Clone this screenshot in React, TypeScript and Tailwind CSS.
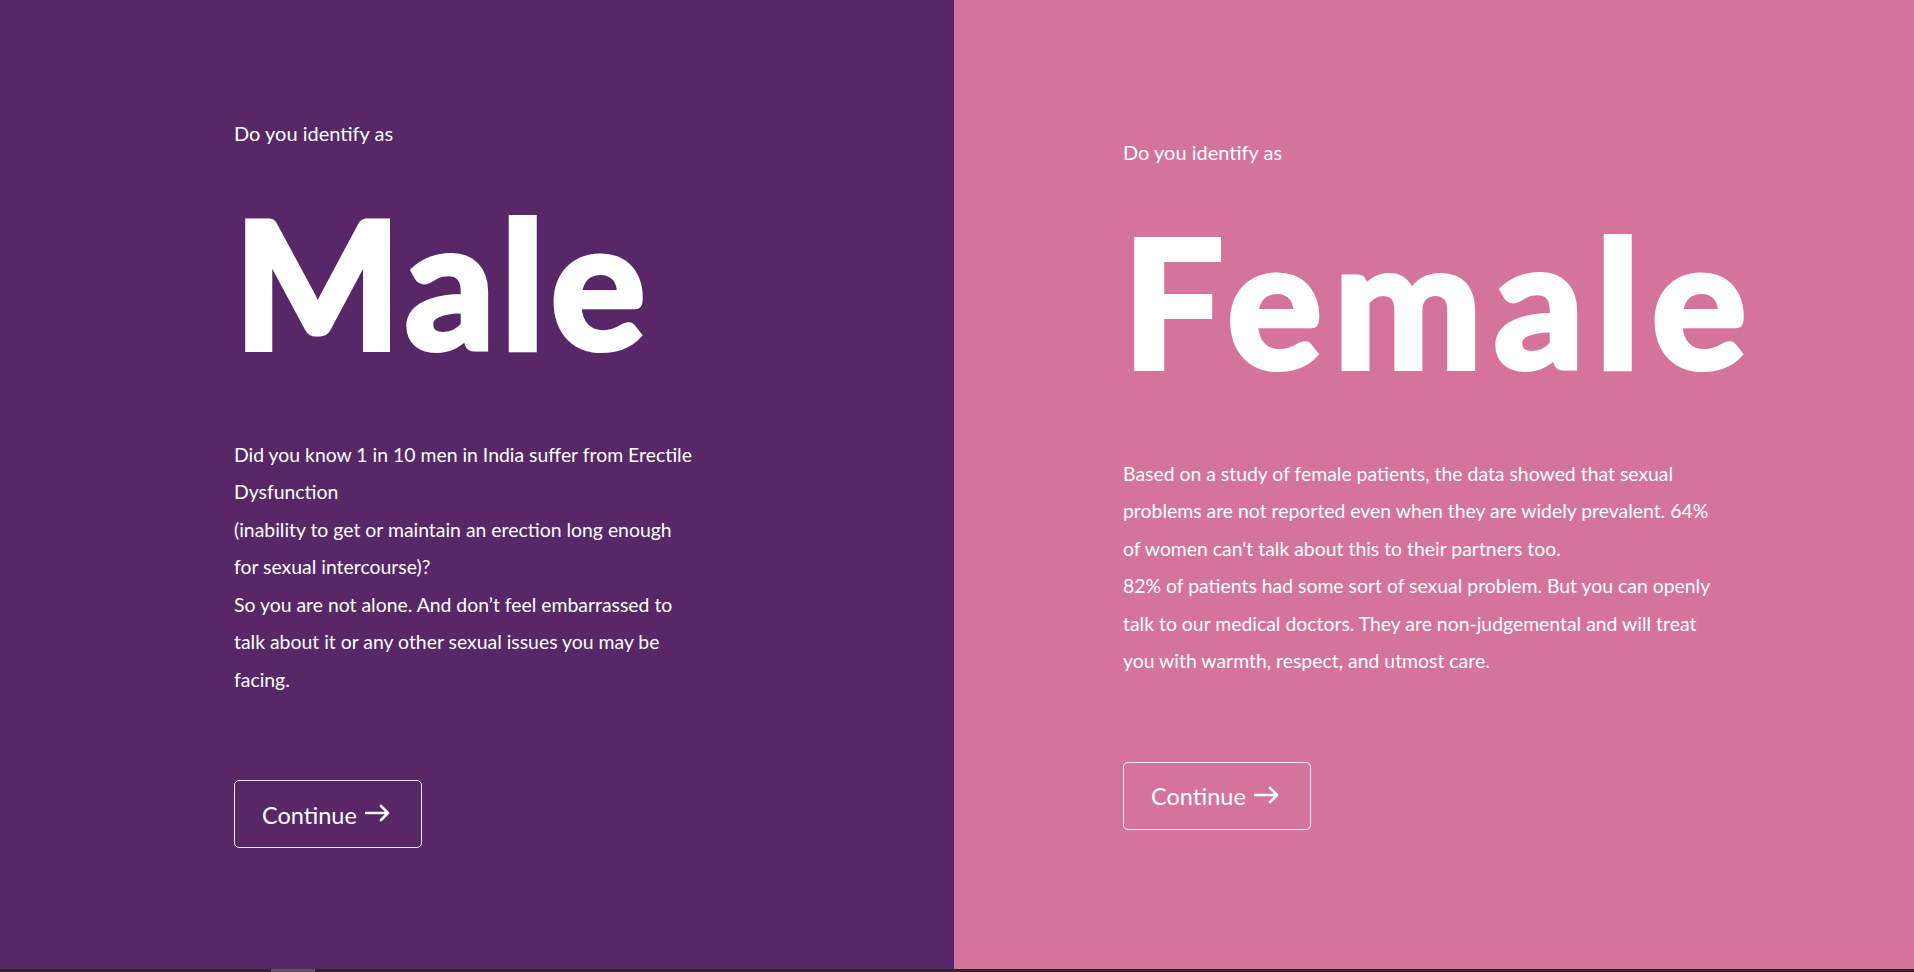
import React from "react";

const maleLines = [
  "Did you know 1 in 10 men in India suffer from Erectile",
  "Dysfunction",
  "(inability to get or maintain an erection long enough",
  "for sexual intercourse)?",
  "So you are not alone. And don’t feel embarrassed to",
  "talk about it or any other sexual issues you may be",
  "facing.",
];

const femaleLines = [
  "Based on a study of female patients, the data showed that sexual",
  "problems are not reported even when they are widely prevalent. 64%",
  "of women can't talk about this to their partners too.",
  "82% of patients had some sort of sexual problem. But you can openly",
  "talk to our medical doctors. They are non-judgemental and will treat",
  "you with warmth, respect, and utmost care.",
];

function Arrow() {
  return (
    <svg width="26" height="18" viewBox="0 0 26 18" fill="none" className="mb-[11px]">
      <path d="M1 9h22M16 2l7 7-7 7" stroke="white" strokeWidth="2.6" strokeLinecap="round" strokeLinejoin="round" />
    </svg>
  );
}

function ContinueButton() {
  return (
    <button className="mt-[82px] flex h-[68px] w-[188px] items-end gap-[8px] rounded-[5px] border border-white/90 pb-[14px] pl-[27px] text-[23.5px] text-white">
      <span>Continue</span>
      <Arrow />
    </button>
  );
}

function Panel({ title, lines, bg, padLeft, tracking }: { title: string; lines: string[]; bg: string; padLeft: string; tracking: string }) {
  return (
    <section className={`flex flex-col justify-center ${bg} ${padLeft}`}>
      <p className="h-6 text-[20px] leading-6 text-white">Do you identify as</p>
      <h1 className={`mt-[47px] h-[177px] text-[177px] leading-none font-bold text-white [-webkit-text-stroke:6px_white] ${tracking}`}>
        {title}
      </h1>
      <div className="mt-[67px] text-[19.4px] leading-[37.5px] text-white">
        {lines.map((l) => (
          <div key={l} className="whitespace-nowrap">{l}</div>
        ))}
      </div>
      <ContinueButton />
    </section>
  );
}

export default function App() {
  return (
    <div className="flex h-[972px] w-full flex-col" style={{ fontFamily: "Lato, 'Open Sans', sans-serif" }}>
      <div className="grid flex-1 grid-cols-[954px_1fr]">
        <Panel title="Male" lines={maleLines} bg="bg-[#572768]" padLeft="pl-[234px]" tracking="tracking-[6px]" />
        <Panel title="Female" lines={femaleLines} bg="bg-[#d5749b]" padLeft="pl-[169px]" tracking="tracking-[12px]" />
      </div>
      <div className="flex h-[3px] bg-[#2b2629]">
        <div className="ml-[271px] w-[44px] bg-[#5a5560]" />
      </div>
    </div>
  );
}
